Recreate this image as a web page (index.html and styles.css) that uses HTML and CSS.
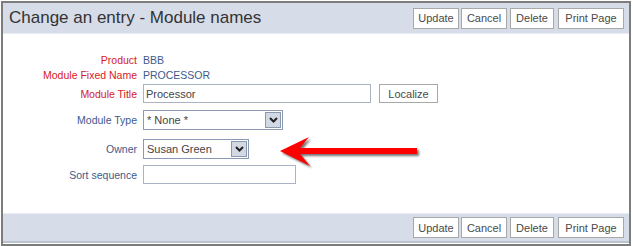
FILE: index.html
```html
<!DOCTYPE html>
<html lang="en">
<head>
  <meta charset="UTF-8" />
  <title>Change an entry - Module names</title>
  <link rel="stylesheet" href="styles.css">
</head>
<body>
  <div class="frame">
    <div class="bar top">
      <h1>Change an entry - Module names</h1>
      <div class="actions">
        <button class="update">Update</button>
        <button class="cancel">Cancel</button>
        <button class="delete">Delete</button>
        <button class="print">Print Page</button>
      </div>
    </div>

    <div class="form">
      <div class="row text first">
        <label class="req">Product</label>
        <span class="value">BBB</span>
      </div>
      <div class="row text">
        <label class="req">Module Fixed Name</label>
        <span class="value">PROCESSOR</span>
      </div>
      <div class="row r-title">
        <label class="req">Module Title</label>
        <input type="text" class="title-input" value="Processor" />
        <button class="localize">Localize</button>
      </div>
      <div class="row r-type">
        <label>Module Type</label>
        <div class="select type">
          <span>* None *</span>
          <i class="drop"><svg width="9" height="6" viewBox="0 0 9 6"><path d="M1 1 L4.5 4.5 L8 1" fill="none" stroke="#222" stroke-width="2"/></svg></i>
        </div>
      </div>
      <div class="row r-owner">
        <label>Owner</label>
        <div class="select owner">
          <span>Susan Green</span>
          <i class="drop"><svg width="9" height="6" viewBox="0 0 9 6"><path d="M1 1 L4.5 4.5 L8 1" fill="none" stroke="#222" stroke-width="2"/></svg></i>
        </div>
      </div>
      <div class="row r-sort">
        <label>Sort sequence</label>
        <input type="text" class="sort-input" value="" />
      </div>

      <svg class="arrow" width="145" height="34" viewBox="0 0 145 34">
        <path d="M2 15 L31 1 L22 12 L139 12 L139 18 L22 18 L32 30 Z" fill="#ff0000"/>
      </svg>
    </div>

    <div class="bar bottom">
      <div class="actions">
        <button class="update">Update</button>
        <button class="cancel">Cancel</button>
        <button class="delete">Delete</button>
        <button class="print">Print Page</button>
      </div>
    </div>
  </div>
</body>
</html>
```

FILE: styles.css
```css
body {
  margin: 0;
  padding: 1px;
  background: #ffffff;
  font-family: "Liberation Sans", Arial, sans-serif;
  font-size: 10.5px;
}
.frame {
  width: 630px;
  height: 245px;
  box-sizing: border-box;
  border: 2px solid #7c7c7c;
  display: flex;
  flex-direction: column;
  position: relative;
}
.bar {
  background: #d6dce8;
  display: flex;
  align-items: center;
}
.bar.top {
  height: 30px;
  border-bottom: 1px solid #e9edf3;
  padding: 0 5px 0 6px;
}
.bar.bottom {
  margin-top: auto;
  height: 27px;
  border-top: 1px solid #e9edf3;
  border-bottom: 2px solid #bcc3d0;
  padding: 0 5px 0 6px;
  justify-content: flex-end;
  margin-bottom: 1px;
}
h1 {
  margin: 0;
  font-size: 17px;
  font-weight: normal;
  color: #333333;
  flex: 1;
}
.actions {
  display: flex;
  gap: 2px;
}
button {
  font-family: "Liberation Sans", Arial, sans-serif;
  font-size: 11px;
  color: #4a4a4a;
  background: #ffffff;
  border: 1px solid #a8a8a8;
  height: 21px;
  padding: 0;
  margin: 0;
  white-space: nowrap;
}
.actions .update { width: 46px; }
.actions .cancel { width: 46px; }
.actions .delete { width: 44px; margin-left: 1px; }
.actions .print { width: 66px; margin-left: 2px; }
.form {
  position: relative;
  padding-top: 18px;
  display: flex;
  flex-direction: column;
}
.row {
  display: flex;
  align-items: center;
  gap: 6px;
}
.row.text {
  height: 15px;
}
.r-title { margin-top: 2px; height: 19px; }
.r-type { margin-top: 7px; height: 20px; }
.r-owner { margin-top: 9px; height: 20px; }
.r-sort { margin-top: 6px; height: 19px; }
label {
  width: 134px;
  text-align: right;
  color: #3d5a8c;
}
label.req {
  color: #d7191c;
}
.value {
  color: #3d5a8c;
}
input {
  font-family: "Liberation Sans", Arial, sans-serif;
  font-size: 11px;
  color: #444444;
  height: 19px;
  box-sizing: border-box;
  border: 1px solid #a9b3c2;
  padding: 0 2px;
  margin: 0;
}
.title-input {
  width: 228px;
}
.localize {
  margin-left: 2px;
  height: 19px;
  width: 59px;
}
.sort-input {
  width: 153px;
}
.select {
  height: 20px;
  box-sizing: border-box;
  border: 1px solid #8a9ab5;
  display: flex;
  align-items: center;
  color: #444444;
  font-size: 11px;
  padding-left: 3px;
  background: #ffffff;
}
.select span {
  flex: 1;
}
.select.type {
  width: 140px;
}
.select.owner {
  width: 106px;
}
.drop {
  width: 16px;
  height: 16px;
  margin-right: 1px;
  background: #d3d9e4;
  border: 1px solid #8c98ac;
  box-sizing: border-box;
  display: flex;
  align-items: center;
  justify-content: center;
}
.arrow {
  position: absolute;
  left: 275px;
  top: 102px;
  filter: drop-shadow(2px 2px 1px rgba(0, 0, 0, 0.55));
}
```
